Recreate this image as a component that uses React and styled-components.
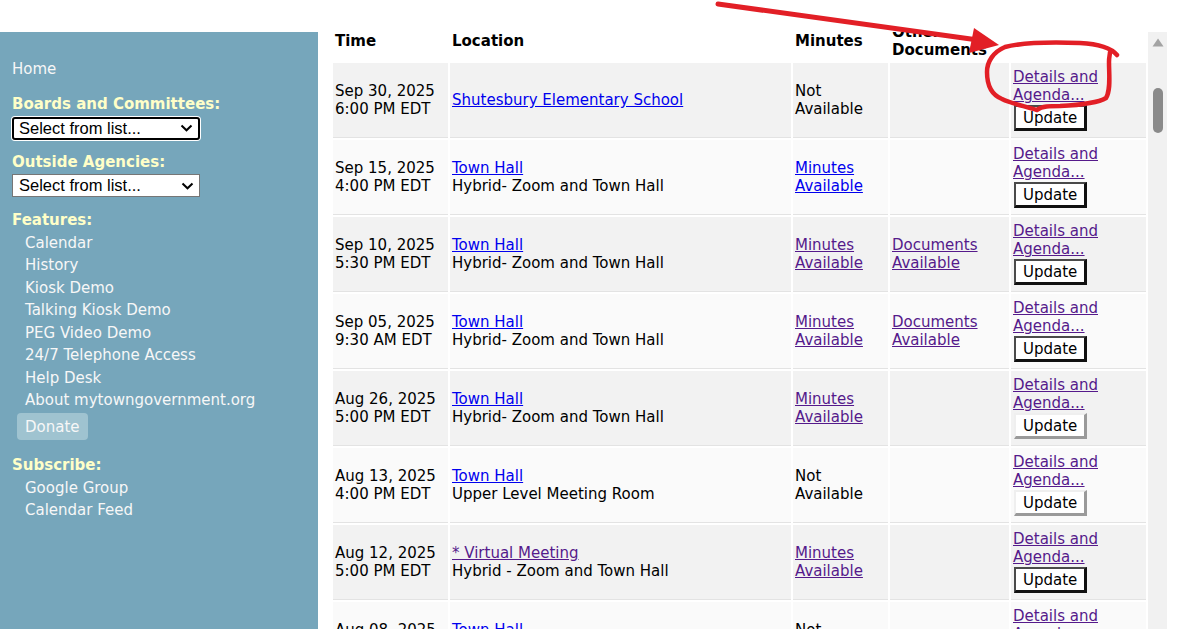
import React from 'react';
import styled, { createGlobalStyle } from 'styled-components';

const GlobalStyle = createGlobalStyle`
  *, *::before, *::after { box-sizing: border-box; }
  html, body { margin: 0; padding: 0; background: #fff; }
  body {
    font-family: "DejaVu Sans", Verdana, sans-serif;
    font-size: 15px;
    color: #000;
    overflow: hidden;
  }
`;

const Page = styled.div`
  position: relative;
  width: 1185px;
  height: 629px;
  display: flex;
  flex-direction: column;
  overflow: hidden;
`;

const TopGap = styled.div`
  height: 32px;
  flex: none;
`;

const Body = styled.div`
  flex: 1;
  display: flex;
  min-height: 0;
`;

const Sidebar = styled.nav`
  width: 318px;
  flex: none;
  background: #76a6bb;
  padding: 26px 0 0 12px;
  line-height: 22.5px;
  color: #f7f7f7;
`;

const NavLink = styled.div`
  color: #f7f7f7;
  padding-left: ${props => props.$indent ? '13px' : '0'};
`;

const Section = styled.div`
  margin-top: ${props => props.$gap || '12px'};
`;

const Heading = styled.div`
  font-weight: bold;
  color: #ffffc8;
`;

const SelectBox = styled.div`
  width: 188px;
  height: 23px;
  margin-top: 1px;
  display: flex;
  align-items: center;
  justify-content: space-between;
  padding: 0 5px 0 ${props => props.$focused ? '5px' : '6px'};
  background: #fff;
  color: #000;
  font-family: "Liberation Sans", Arial, sans-serif;
  font-size: 16.5px;
  border: ${props => props.$focused ? '2px solid #000' : '1px solid #767676'};
  border-radius: ${props => props.$focused ? '3px' : '0'};
  box-shadow: ${props => props.$focused ? '0 0 0 1px #fff' : 'none'};
`;

const DonateButton = styled.div`
  display: inline-block;
  margin: 1px 0 0 5px;
  padding: 3px 8px 2px;
  border-radius: 4px;
  background: #9fc3d0;
  color: #f7f7f7;
`;

const Content = styled.main`
  flex: 1;
  min-width: 0;
  overflow: hidden;
  padding-left: 13px;
`;

const Table = styled.table`
  width: 817px;
  table-layout: fixed;
  border-collapse: separate;
  border-spacing: 2px;
  margin-top: -13px;
  line-height: 18px;
`;

const HeadCell = styled.th`
  width: ${props => props.$w}px;
  padding: 2px;
  text-align: left;
  vertical-align: middle;
  font-weight: bold;
`;

const Cell = styled.td`
  padding: 2px;
  vertical-align: middle;
  background: ${props => props.$odd ? '#f2f2f2' : '#fafafa'};
  border-bottom: 1px solid #e3e3e3;
`;

const ActionCell = styled(Cell)`
  padding: 5px 2px 6px;
`;

const Link = styled.a`
  color: ${props => props.$visited ? '#551a8b' : '#0000ee'};
  text-decoration: underline;
  cursor: pointer;
`;

const UpdateButton = styled.button`
  display: block;
  height: 26px;
  margin: 1px 0 0 1px;
  padding: 0 7px;
  background: #fff;
  color: #000;
  font-family: "DejaVu Sans", Verdana, sans-serif;
  font-size: 15px;
  line-height: 20px;
  border-style: solid;
  border-width: 2px 3px 3px 2px;
  border-color: ${props => props.$light
    ? '#efefef #9a9a9a #9a9a9a #efefef'
    : '#4a4a4a #111 #111 #4a4a4a'};
  border-radius: 0;
`;

const ScrollTrack = styled.div`
  width: 19px;
  flex: none;
  background: #f1f1f1;
  display: flex;
  flex-direction: column;
  align-items: center;
  padding-top: 6px;
`;

const ScrollThumb = styled.div`
  width: 10px;
  height: 45px;
  margin-top: 41px;
  border-radius: 5px;
  background: #8a8a8a;
`;

const Gutter = styled.div`
  width: 18px;
  flex: none;
`;

const Markup = styled.svg`
  position: absolute;
  top: 0;
  left: 0;
  pointer-events: none;
`;

const features = [
  'Calendar', 'History', 'Kiosk Demo', 'Talking Kiosk Demo', 'PEG Video Demo',
  '24/7 Telephone Access', 'Help Desk', 'About mytowngovernment.org',
];

const hybrid = 'Hybrid- Zoom and Town Hall';

const meetings = [
  { date: 'Sep 30, 2025', time: '6:00 PM EDT', place: 'Shutesbury Elementary School', room: null, minutes: null },
  { date: 'Sep 15, 2025', time: '4:00 PM EDT', place: 'Town Hall', room: hybrid, minutes: 'new' },
  { date: 'Sep 10, 2025', time: '5:30 PM EDT', place: 'Town Hall', room: hybrid, minutes: 'seen', docs: true },
  { date: 'Sep 05, 2025', time: '9:30 AM EDT', place: 'Town Hall', room: hybrid, minutes: 'seen', docs: true },
  { date: 'Aug 26, 2025', time: '5:00 PM EDT', place: 'Town Hall', room: hybrid, minutes: 'seen', light: true },
  { date: 'Aug 13, 2025', time: '4:00 PM EDT', place: 'Town Hall', room: 'Upper Level Meeting Room', minutes: null, light: true },
  { date: 'Aug 12, 2025', time: '5:00 PM EDT', place: '* Virtual Meeting', placeSeen: true, room: 'Hybrid - Zoom and Town Hall', minutes: 'seen' },
  { date: 'Aug 08, 2025', time: '4:00 PM EDT', place: 'Town Hall', room: hybrid, minutes: null },
];

const Chevron = () => (
  <svg width="13" height="8" viewBox="0 0 13 8">
    <path d="M1.5 1.5 L6.5 6.3 L11.5 1.5" fill="none" stroke="#000" strokeWidth="2" />
  </svg>
);

const App = () => {
  return (
    <Page>
      <GlobalStyle />
      <TopGap />
      <Body>
        <Sidebar>
          <NavLink>Home</NavLink>
          <Section $gap="12.5px">
            <Heading>Boards and Committees:</Heading>
            <SelectBox $focused>
              <span>Select from list...</span>
              <Chevron />
            </SelectBox>
          </Section>
          <Section $gap="11px">
            <Heading>Outside Agencies:</Heading>
            <SelectBox>
              <span>Select from list...</span>
              <Chevron />
            </SelectBox>
          </Section>
          <Section $gap="12px">
            <Heading>Features:</Heading>
            {features.map(f => <NavLink key={f} $indent>{f}</NavLink>)}
            <DonateButton>Donate</DonateButton>
          </Section>
          <Section $gap="14px">
            <Heading>Subscribe:</Heading>
            <NavLink $indent>Google Group</NavLink>
            <NavLink $indent>Calendar Feed</NavLink>
          </Section>
        </Sidebar>

        <Content>
          <Table>
            <thead>
              <tr>
                <HeadCell $w={115}>Time</HeadCell>
                <HeadCell $w={341}>Location</HeadCell>
                <HeadCell $w={95}>Minutes</HeadCell>
                <HeadCell $w={119}>Other Documents</HeadCell>
                <HeadCell $w={135}></HeadCell>
              </tr>
            </thead>
            <tbody>
              {meetings.map((m, i) => {
                const odd = i % 2 === 0;
                return (
                  <tr key={m.date}>
                    <Cell $odd={odd}>{m.date}<br />{m.time}</Cell>
                    <Cell $odd={odd}>
                      <Link $visited={m.placeSeen}>{m.place}</Link>
                      {m.room && <><br />{m.room}</>}
                    </Cell>
                    <Cell $odd={odd}>
                      {m.minutes
                        ? <Link $visited={m.minutes === 'seen'}>Minutes Available</Link>
                        : 'Not Available'}
                    </Cell>
                    <Cell $odd={odd}>
                      {m.docs && <Link $visited>Documents Available</Link>}
                    </Cell>
                    <ActionCell $odd={odd}>
                      <Link $visited>Details and Agenda...</Link>
                      <UpdateButton $light={m.light}>Update</UpdateButton>
                    </ActionCell>
                  </tr>
                );
              })}
            </tbody>
          </Table>
        </Content>

        <ScrollTrack>
          <svg width="12" height="9" viewBox="0 0 12 9">
            <path d="M6 0.5 L11.5 8.5 L0.5 8.5 Z" fill="#a3a3a3" />
          </svg>
          <ScrollThumb />
        </ScrollTrack>
        <Gutter />
      </Body>

      <Markup width="1185" height="629" viewBox="0 0 1185 629">
        <path d="M718 4 L978 40" stroke="#e21f26" strokeWidth="5" strokeLinecap="round" fill="none" />
        <polygon points="974,28 999,45 969,53" fill="#e21f26" />
        <path
          d="M1117 55 C1112 49 1100 44 1080 43 C1055 42 1025 42 1005 47 C993 52 987 62 987 72 C987 85 992 95 1002 99 C1012 104 1025 106 1037 110 C1042 106 1050 106 1060 106 C1080 105 1098 103 1106 98 C1111 90 1109 75 1109 62 C1109 57 1110 54 1110 52"
          stroke="#e21f26"
          strokeWidth="4.5"
          strokeLinecap="round"
          strokeLinejoin="round"
          fill="none"
        />
      </Markup>
    </Page>
  );
};

export default App;
